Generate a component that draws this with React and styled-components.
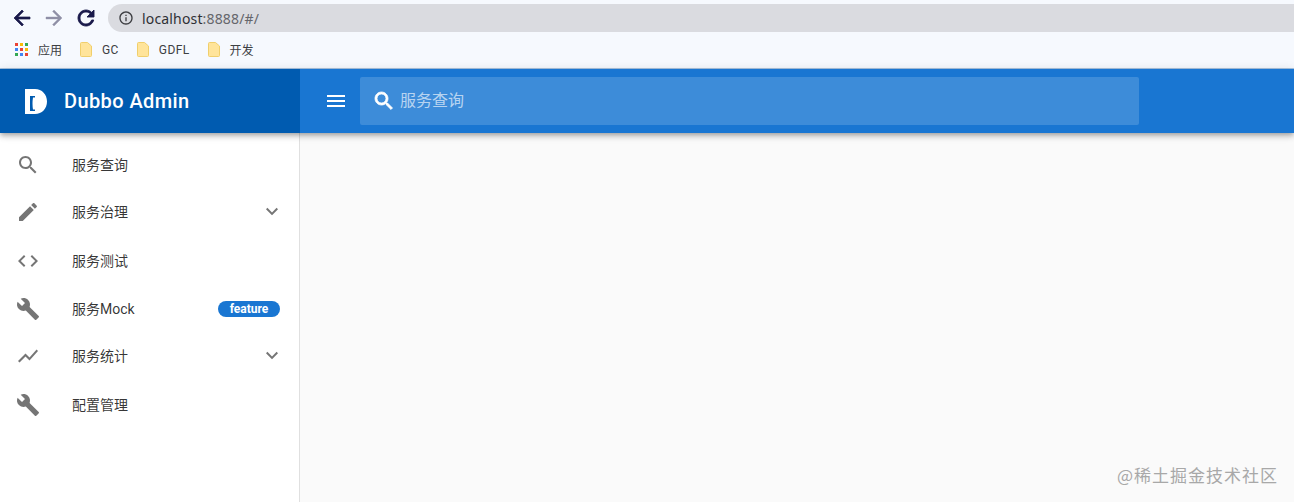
import React from 'react';
import styled, { createGlobalStyle } from 'styled-components';

const GlobalStyle = createGlobalStyle`
  html, body {
    margin: 0;
    height: 100%;
    overflow: hidden;
    background: #fafafa;
  }
  #root {
    height: 100%;
  }
  * {
    box-sizing: border-box;
  }
`;

const paths = {
  back: 'M20 11H7.83l5.59-5.59L12 4l-8 8 8 8 1.41-1.41L7.83 13H20v-2z',
  forward: 'M12 4l-1.41 1.41L16.17 11H4v2h12.17l-5.58 5.59L12 20l8-8z',
  reload:
    'M17.65 6.35C16.2 4.9 14.21 4 12 4c-4.42 0-7.99 3.58-7.99 8s3.57 8 7.99 8c3.73 0 6.84-2.55 7.73-6h-2.08c-.82 2.33-3.04 4-5.65 4-3.31 0-6-2.69-6-6s2.69-6 6-6c1.66 0 3.14.69 4.22 1.78L13 11h7V4l-2.35 2.35z',
  info: 'M11 7h2v2h-2zm0 4h2v6h-2zm1-9C6.48 2 2 6.48 2 12s4.48 10 10 10 10-4.48 10-10S17.52 2 12 2zm0 18c-4.41 0-8-3.59-8-8s3.59-8 8-8 8 3.59 8 8-3.59 8-8 8z',
  search:
    'M15.5 14h-.79l-.28-.27C15.41 12.59 16 11.11 16 9.5 16 5.91 13.09 3 9.5 3S3 5.91 3 9.5 5.91 16 9.5 16c1.61 0 3.09-.59 4.23-1.57l.27.28v.79l5 4.99L20.49 19l-4.99-5zm-6 0C7.01 14 5 11.99 5 9.5S7.01 5 9.5 5 14 7.01 14 9.5 11.99 14 9.5 14z',
  edit: 'M3 17.25V21h3.75L17.81 9.94l-3.75-3.75L3 17.25zM20.71 7.04c.39-.39.39-1.02 0-1.41l-2.34-2.34c-.39-.39-1.02-.39-1.41 0l-1.83 1.83 3.75 3.75 1.83-1.83z',
  code: 'M9.4 16.6L4.8 12l4.6-4.6L8 6l-6 6 6 6 1.4-1.4zm5.2 0l4.6-4.6-4.6-4.6L16 6l6 6-6 6-1.4-1.4z',
  build:
    'M22.7 19l-9.1-9.1c.9-2.3.4-5-1.5-6.9-2-2-5-2.4-7.4-1.3L9 6 6 9 1.6 4.7C.4 7.1.9 10.1 2.9 12.1c1.9 1.9 4.6 2.4 6.9 1.5l9.1 9.1c.4.4 1 .4 1.4 0l2.3-2.3c.5-.4.5-1.1.1-1.4z',
  chart: 'M3.5 18.49l6-6.01 4 4L22 6.92l-1.41-1.41-7.09 7.97-4-4L2 16.99z',
  down: 'M7.41 7.84L12 12.42l4.59-4.58L18 9.25l-6 6-6-6z',
  menu: 'M3 18h18v-2H3v2zm0-5h18v-2H3v2zm0-7v2h18V6H3z'
};

const Icon = ({ name, size = 24, color = 'currentColor', bold = 0 }) => (
  <svg
    width={size}
    height={size}
    viewBox="0 0 24 24"
    fill={color}
    stroke={bold ? color : 'none'}
    strokeWidth={bold}
    style={{ flex: 'none', display: 'block' }}
  >
    <path d={paths[name]} />
  </svg>
);

const Page = styled.div`
  position: relative;
  height: 502px;
  display: flex;
  flex-direction: column;
  font-family: Roboto, 'Noto Sans CJK SC', sans-serif;
`;

const Chrome = styled.div`
  height: 69px;
  flex: none;
  background: #f6f9fe;
  border-bottom: 1px solid #a9c4e0;
  display: flex;
  flex-direction: column;
`;

const AddressRow = styled.div`
  height: 36px;
  padding-top: 4px;
  padding-left: 6px;
  display: flex;
  align-items: flex-start;
`;

const NavButton = styled.div`
  width: 32px;
  height: 28px;
  display: flex;
  align-items: center;
  justify-content: center;
  color: ${(p) => p.$color};
`;

const AddressPill = styled.div`
  margin-left: 6px;
  flex: 1;
  height: 28px;
  border-radius: 14px 0 0 14px;
  background: #dadbe0;
  display: flex;
  align-items: center;
  padding-left: 10px;
  gap: 8px;
  color: #3c3d41;
`;

const Url = styled.span`
  font-family: 'Noto Sans', sans-serif;
  font-size: 14px;
  letter-spacing: 0.16px;
  color: #2f3034;
`;

const UrlMuted = styled.span`
  color: #65666b;
`;

const BookmarkRow = styled.div`
  height: 28px;
  display: flex;
  align-items: center;
  padding-left: 15px;
  padding-bottom: 1px;
`;

const Bookmark = styled.div`
  display: flex;
  align-items: center;
  gap: 10px;
  margin-right: ${(p) => p.$after}px;
  font-size: 12px;
  letter-spacing: ${(p) => p.$spacing || 0}px;
  color: #3d4043;
`;

const AppsGrid = styled.div`
  display: grid;
  grid-template-columns: repeat(3, 3px);
  grid-auto-rows: 3px;
  gap: 2px;
`;

const AppsDot = styled.span`
  background: ${(p) => p.$color};
`;

const Header = styled.header`
  height: 64px;
  flex: none;
  display: flex;
  background: #1976d2;
  box-shadow: 0 2px 4px -1px rgba(0, 0, 0, 0.2), 0 4px 5px 0 rgba(0, 0, 0, 0.14), 0 1px 10px 0 rgba(0, 0, 0, 0.12);
  position: relative;
  z-index: 2;
`;

const Brand = styled.div`
  width: 300px;
  flex: none;
  background: #005bb0;
  display: flex;
  align-items: center;
  padding-left: 25px;
  gap: 17px;
  color: #fff;
  font-size: 20px;
  font-weight: 500;
  letter-spacing: 0.4px;
`;

const HeaderBar = styled.div`
  flex: 1;
  display: flex;
  align-items: center;
  padding-left: 24px;
`;

const MenuButton = styled.div`
  width: 36px;
  display: flex;
  color: #fff;
`;

const SearchBox = styled.div`
  width: 779px;
  height: 48px;
  background: rgba(255, 255, 255, 0.16);
  border-radius: 2px;
  display: flex;
  align-items: center;
  padding-left: 12px;
  gap: 4px;
  color: #fff;
`;

const SearchHint = styled.span`
  font-size: 16px;
  padding-bottom: 4px;
  color: rgba(255, 255, 255, 0.65);
`;

const Body = styled.div`
  flex: 1;
  display: flex;
  min-height: 0;
`;

const Sidebar = styled.nav`
  width: 300px;
  flex: none;
  background: #fff;
  border-right: 1px solid #e0e0e0;
  padding-top: 8px;
`;

const NavItem = styled.div`
  height: 48px;
  display: flex;
  align-items: center;
  padding: 0 19px ${(p) => (p.$expand ? 2 : 0)}px 16px;
  font-size: 14px;
  color: rgba(0, 0, 0, 0.8);
`;

const NavIcon = styled.div`
  width: 56px;
  flex: none;
  color: rgba(0, 0, 0, 0.54);
`;

const NavLabel = styled.span`
  flex: 1;
  padding-bottom: 2px;
`;

const Chevron = styled.div`
  margin-right: -4px;
  color: rgba(0, 0, 0, 0.54);
`;

const Badge = styled.span`
  width: 62px;
  height: 16px;
  border-radius: 8px;
  background: #1976d2;
  color: #fff;
  font-size: 12px;
  font-weight: 700;
  line-height: 16px;
  text-align: center;
`;

const Main = styled.main`
  flex: 1;
  background: #fafafa;
`;

const Watermark = styled.div`
  position: absolute;
  right: 16px;
  bottom: 15px;
  font-family: 'Noto Sans CJK SC', sans-serif;
  font-size: 17px;
  letter-spacing: 1px;
  line-height: 24px;
  color: #a8a8a8;
`;

const Folder = () => (
  <svg width="12" height="15" viewBox="0 0 12 15">
    <path d="M.5 1.5a1 1 0 0 1 1-1h6l4 3.5v9.500a1 1 0 0 1-1 1h-9a1 1 0 0 1-1-1z" fill="#ffe49a" stroke="#f0cf6c" />
  </svg>
);

const DubboLogo = () => (
  <svg width="22" height="25" viewBox="0 0 22 25">
    <path
      d="M0 0h10c7 0 12 5.500 12 12.500S17 25 10 25H0zM5 7v15h5v-1.500H8q-.5-3-.5-6t.5-6h2V7z"
      fill="#fff"
      fillRule="evenodd"
    />
  </svg>
);

const appColors = ['#ea4335', '#fbbc05', '#34a853', '#4285f4', '#ea4335', '#fbbc05', '#34a853', '#4285f4', '#ea4335'];

const navItems = [
  { icon: 'search', label: '服务查询' },
  { icon: 'edit', label: '服务治理', expand: true },
  { icon: 'code', label: '服务测试' },
  { icon: 'build', label: '服务Mock', badge: 'feature' },
  { icon: 'chart', label: '服务统计', expand: true },
  { icon: 'build', label: '配置管理' }
];

export default function App() {
  return (
    <Page>
      <GlobalStyle />
      <Chrome>
        <AddressRow>
          <NavButton $color="#1a1a4b"><Icon name="back" bold={0.7} /></NavButton>
          <NavButton $color="#8f90a6"><Icon name="forward" bold={0.4} /></NavButton>
          <NavButton $color="#1a1a4b"><Icon name="reload" bold={0.9} /></NavButton>
          <AddressPill>
            <Icon name="info" size={16} />
            <Url>localhost<UrlMuted>:8888/#/</UrlMuted></Url>
          </AddressPill>
        </AddressRow>
        <BookmarkRow>
          <Bookmark $after={18}>
            <AppsGrid>
              {appColors.map((color, i) => (
                <AppsDot key={i} $color={color} />
              ))}
            </AppsGrid>
            应用
          </Bookmark>
          <Bookmark $after={18} $spacing={0.4}><Folder />GC</Bookmark>
          <Bookmark $after={18} $spacing={0.4}><Folder />GDFL</Bookmark>
          <Bookmark $after={0}><Folder />开发</Bookmark>
        </BookmarkRow>
      </Chrome>
      <Header>
        <Brand>
          <DubboLogo />
          Dubbo Admin
        </Brand>
        <HeaderBar>
          <MenuButton><Icon name="menu" /></MenuButton>
          <SearchBox>
            <Icon name="search" bold={0.8} />
            <SearchHint>服务查询</SearchHint>
          </SearchBox>
        </HeaderBar>
      </Header>
      <Body>
        <Sidebar>
          {navItems.map((item) => (
            <NavItem key={item.label} $expand={item.expand}>
              <NavIcon><Icon name={item.icon} /></NavIcon>
              <NavLabel>{item.label}</NavLabel>
              {item.expand && <Chevron><Icon name="down" /></Chevron>}
              {item.badge && <Badge>{item.badge}</Badge>}
            </NavItem>
          ))}
        </Sidebar>
        <Main />
      </Body>
      <Watermark>@稀土掘金技术社区</Watermark>
    </Page>
  );
}
